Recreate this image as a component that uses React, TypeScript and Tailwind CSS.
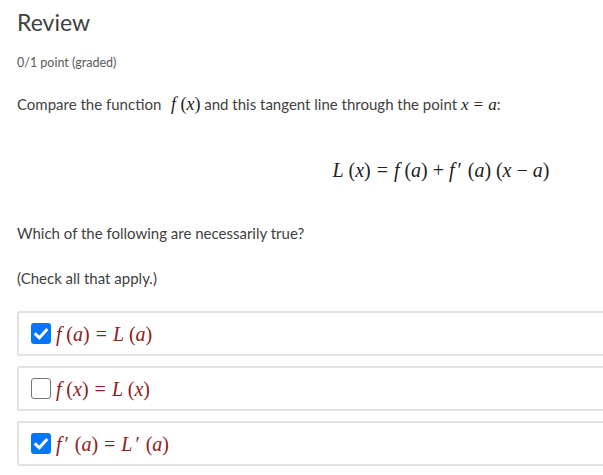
import React from "react";

const M = ({ children }: { children: React.ReactNode }) => (
  <span className="font-['Liberation_Serif',serif] italic">{children}</span>
);
const R = ({ children }: { children: React.ReactNode }) => (
  <span className="font-['Liberation_Serif',serif] not-italic">{children}</span>
);
const Rel = ({ children }: { children: React.ReactNode }) => (
  <span className="mx-[0.3em] font-['Liberation_Serif',serif] not-italic">{children}</span>
);
const Bin = ({ children }: { children: React.ReactNode }) => (
  <span className="mx-[0.25em] font-['Liberation_Serif',serif] not-italic">{children}</span>
);
const P = () => <span className="ml-[3px] mr-[1px] font-['Liberation_Serif',serif] not-italic">′</span>;
const Op = ({ children }: { children: React.ReactNode }) => (
  <span className="ml-[0.24em] font-['Liberation_Serif',serif] not-italic">{children}</span>
);

function Check({ checked }: { checked: boolean }) {
  return checked ? (
    <span className="flex h-[21px] w-[20px] shrink-0 items-center justify-center rounded-[3px] bg-[#0075ff]">
      <svg width="16" height="16" viewBox="0 0 16 16">
        <path d="M2.8 8.4 L6.3 11.8 L13.3 4" fill="none" stroke="white" strokeWidth="3" strokeLinecap="square" strokeLinejoin="miter" />
      </svg>
    </span>
  ) : (
    <span className="h-[21px] w-[20px] shrink-0 rounded-[3px] border border-[#767676] bg-white" />
  );
}

function Option({ checked, children }: { checked: boolean; children: React.ReactNode }) {
  return (
    <div className="flex h-[45px] items-center gap-[5px] rounded-[2px] border-2 border-[#e2e2e2] pl-[12px]">
      <Check checked={checked} />
      <span className="text-[20px] leading-none text-[#8b2020]">{children}</span>
    </div>
  );
}

export default function App() {
  return (
    <div className="h-[475px] w-[603px] overflow-hidden bg-white">
      <div className="w-[865px] pl-[17px] font-['Lato',sans-serif] text-[#414141]">
        <h2 className="pt-[8px] text-[23px] leading-[28px] text-[#414141]">Review</h2>
        <div className="mt-[19px] text-[12.5px] leading-[16px] text-[#5a5a5a]">0/1 point (graded)</div>
        <p className="mt-[20px] text-[15px] leading-[24px]">
          Compare the function{" "}
          <span className="ml-[6px] text-[18px] text-[#222]">
            <M>f</M>
            <Op>(</Op>
            <M>x</M>
            <R>)</R>
          </span>{" "}
          and this tangent line through the point{" "}
          <span className="text-[17px] text-[#222]">
            <M>x</M>
            <Rel>=</Rel>
            <M>a</M>
          </span>
          :
        </p>
        <div className="mt-[37px] flex justify-center text-[20px] text-[#222]">
          <span>
            <M>L</M>
            <Op>(</Op>
            <M>x</M>
            <R>)</R>
            <Rel>=</Rel>
            <M>f</M>
            <Op>(</Op>
            <M>a</M>
            <R>)</R>
            <Bin>+</Bin>
            <M>f</M>
            <P />
            <Op>(</Op>
            <M>a</M>
            <R>)</R>
            <Op>(</Op>
            <M>x</M>
            <Bin>−</Bin>
            <M>a</M>
            <R>)</R>
          </span>
        </div>
        <p className="mt-[36px] text-[15px] leading-[24px]">Which of the following are necessarily true?</p>
        <p className="mt-[21px] text-[15px] leading-[24px]">(Check all that apply.)</p>
        <div className="mt-[21px] flex flex-col gap-[10px]">
          <Option checked>
            <M>f</M>
            <Op>(</Op>
            <M>a</M>
            <R>)</R>
            <Rel>=</Rel>
            <M>L</M>
            <Op>(</Op>
            <M>a</M>
            <R>)</R>
          </Option>
          <Option checked={false}>
            <M>f</M>
            <Op>(</Op>
            <M>x</M>
            <R>)</R>
            <Rel>=</Rel>
            <M>L</M>
            <Op>(</Op>
            <M>x</M>
            <R>)</R>
          </Option>
          <Option checked>
            <M>f</M>
            <P />
            <Op>(</Op>
            <M>a</M>
            <R>)</R>
            <Rel>=</Rel>
            <M>L</M>
            <P />
            <Op>(</Op>
            <M>a</M>
            <R>)</R>
          </Option>
        </div>
      </div>
    </div>
  );
}
